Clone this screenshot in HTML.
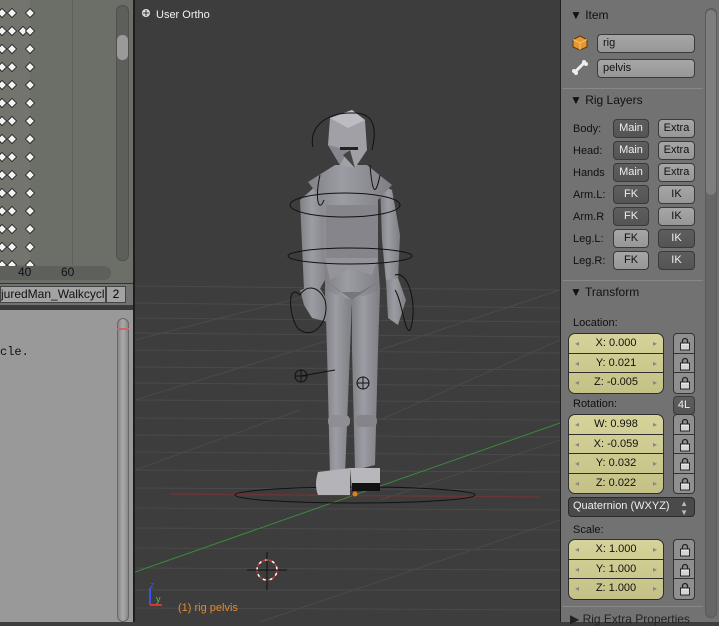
<!DOCTYPE html>
<html><head><meta charset="utf-8"><style>
*{margin:0;padding:0;box-sizing:border-box}
body{width:719px;height:622px;overflow:hidden;background:#3d3d3d;font-family:"Liberation Sans","DejaVu Sans",sans-serif;position:relative}
.a{position:absolute}
.lbl{position:absolute;font-size:11px;color:#101010}
.btn{position:absolute;height:19px;border:1px solid #3a3a3a;border-radius:4px;font-size:11px;text-align:center;line-height:17px}
.lt{background:linear-gradient(#a6a6a6,#979797);color:#111}
.dk{background:linear-gradient(#5e5e5e,#545454);color:#eee}
.fld{position:absolute;left:568px;width:96px;background:linear-gradient(#d6d39a,#c4c186);border:1px solid #2e2e2e;border-radius:7px;overflow:hidden}
.fld div{height:19.5px;border-bottom:1px solid #2e2e2e;font-size:11px;color:#111;text-align:center;line-height:19px;position:relative}
.fld div:last-child{border-bottom:none}
.fld div:before{content:"◂";position:absolute;left:6px;color:#888;font-size:8px}
.fld div:after{content:"▸";position:absolute;right:6px;color:#888;font-size:8px}
.lk{position:absolute;left:673px;width:22px;background:#8f8f8f;border:1px solid #333;border-radius:4px;overflow:hidden}
.lk div{height:19.5px;border-bottom:1px solid #333;position:relative}
.lk div:last-child{border-bottom:none}
.lk svg{position:absolute;left:5px;top:3px}
.hd{position:absolute;left:570px;font-size:12px;color:#111}
.sep{position:absolute;left:563px;width:140px;height:1px;background:#555;border-bottom:1px solid #888}
</style></head><body>
<svg width="0" height="0" style="position:absolute"><defs><g id="lock"><path d="M3.5 6V4a2.5 2.5 0 0 1 5 0v2" fill="none" stroke="#222" stroke-width="1.3"/><rect x="1.5" y="6" width="9" height="7" fill="#e8e8e8" stroke="#222"/><path d="M1.5 9h9M1.5 11h9" stroke="#999" stroke-width="0.6"/></g></defs></svg>
<div class="a" style="left:0;top:0;width:133px;height:283px;background:#6c6e68"></div>
<div class="a" style="left:0;top:0;width:30px;height:265px;background:#72746d"></div>
<div class="a" style="left:72px;top:0;width:1px;height:265px;background:#5e605b"></div>
<svg class="a" style="left:0;top:0" width="133" height="283">
<defs><path id="dm" d="M0 -4.5L4.5 0L0 4.5L-4.5 0Z" fill="#f2f2f2" stroke="#1a1a1a" stroke-width="0.8"/></defs>
<use href="#dm" x="2" y="13"/><use href="#dm" x="12" y="13"/><use href="#dm" x="30" y="13"/>
<use href="#dm" x="2" y="31"/><use href="#dm" x="12" y="31"/><use href="#dm" x="23" y="31"/><use href="#dm" x="30" y="31"/>
<use href="#dm" x="2" y="49"/><use href="#dm" x="12" y="49"/><use href="#dm" x="30" y="49"/>
<use href="#dm" x="2" y="67"/><use href="#dm" x="12" y="67"/><use href="#dm" x="30" y="67"/>
<use href="#dm" x="2" y="85"/><use href="#dm" x="12" y="85"/><use href="#dm" x="30" y="85"/>
<use href="#dm" x="2" y="103"/><use href="#dm" x="12" y="103"/><use href="#dm" x="30" y="103"/>
<use href="#dm" x="2" y="121"/><use href="#dm" x="12" y="121"/><use href="#dm" x="30" y="121"/>
<use href="#dm" x="2" y="139"/><use href="#dm" x="12" y="139"/><use href="#dm" x="30" y="139"/>
<use href="#dm" x="2" y="157"/><use href="#dm" x="12" y="157"/><use href="#dm" x="30" y="157"/>
<use href="#dm" x="2" y="175"/><use href="#dm" x="12" y="175"/><use href="#dm" x="30" y="175"/>
<use href="#dm" x="2" y="193"/><use href="#dm" x="12" y="193"/><use href="#dm" x="30" y="193"/>
<use href="#dm" x="2" y="211"/><use href="#dm" x="12" y="211"/><use href="#dm" x="30" y="211"/>
<use href="#dm" x="2" y="229"/><use href="#dm" x="12" y="229"/><use href="#dm" x="30" y="229"/>
<use href="#dm" x="2" y="247"/><use href="#dm" x="12" y="247"/><use href="#dm" x="30" y="247"/>
<use href="#dm" x="2" y="265"/><use href="#dm" x="12" y="265"/><use href="#dm" x="30" y="265"/>
</svg>
<div class="a" style="left:116px;top:5px;width:13px;height:256px;background:#5d5f5a;border:1px solid #4e504b;border-radius:6px"></div>
<div class="a" style="left:117px;top:35px;width:11px;height:25px;background:#9a9a9a;border-radius:5px"></div>
<div class="a" style="left:0;top:266px;width:111px;height:14px;background:#5e605b;border-radius:0 7px 7px 0"></div>
<div class="a" style="left:18px;top:265px;font-size:12px;color:#111">40</div>
<div class="a" style="left:61px;top:265px;font-size:12px;color:#111">60</div>
<div class="a" style="left:0;top:283px;width:133px;height:22px;background:#727272;border-top:1px solid #333"></div>
<div class="a" style="left:0;top:286px;width:106px;height:17px;background:#a3a3a3;border:1px solid #444;font-size:12px;line-height:15px;color:#111;overflow:hidden;white-space:nowrap">juredMan_Walkcycle</div>
<div class="a" style="left:106px;top:286px;width:20px;height:17px;background:#a3a3a3;border:1px solid #444;font-size:12px;text-align:center;line-height:15px">2</div>
<div class="a" style="left:0;top:306px;width:133px;height:4px;background:#3a3a3a"></div>
<div class="a" style="left:0;top:310px;width:133px;height:312px;background:#999"></div>
<div class="a" style="left:0;top:345px;font-family:'Liberation Mono',monospace;font-size:12px;color:#111">cle.</div>
<div class="a" style="left:117px;top:318px;width:12px;height:304px;background:linear-gradient(90deg,#888,#aaa,#888);border-radius:6px;border:1px solid #666"></div>
<div class="a" style="left:117px;top:328px;width:12px;height:2px;background:#c66"></div>
<div class="a" style="left:133px;top:0;width:2px;height:622px;background:#1e1e1e"></div>
<svg class="a" style="left:135px;top:0" width="425" height="622" viewBox="135 0 425 622">
<rect x="135" y="0" width="425" height="622" fill="#3d3d3d"/>
<g stroke="#4a4a4a" stroke-width="1">
<path d="M135 286L560 290M135 303L560 308M135 318L560 322M135 333L560 337M135 350L560 353M135 367L560 370M135 383L560 386M135 400L560 402M135 418L560 420M135 435L560 437M135 452L560 455M135 470L560 472M135 488L560 490M135 508L560 510M135 528L560 530M135 548L560 550M135 568L560 570M135 590L560 590M135 608L560 610"/>
<path d="M135 340L330 290M135 400L330 340M135 470L300 410M380 350L560 290M380 420L560 340M380 500L560 440M260 622L560 520"/>
</g>
<line x1="135" y1="572" x2="560" y2="423" stroke="#3d8a3d" stroke-width="1"/>
<line x1="170" y1="494" x2="540" y2="497" stroke="#6a3535" stroke-width="1.5"/>
<ellipse cx="355" cy="495" rx="120" ry="8" fill="none" stroke="#111"/>
<defs>
<linearGradient id="bg" x1="0" x2="1"><stop offset="0" stop-color="#808086"/><stop offset="0.4" stop-color="#9c9ca4"/><stop offset="1" stop-color="#7e7e84"/></linearGradient>
</defs>
<g fill="url(#bg)">
<path d="M300 200L318 184L330 190L325 280L318 292L304 290Z"/>
<path d="M380 185L392 190L400 235L398 280L386 282L382 240Z"/>
<path d="M300 290L318 285L330 305L328 322L312 318L304 305Z"/>
<path d="M386 280L398 278L406 300L398 325L388 318Z"/>
<path d="M308 182L335 165L367 165L392 185L378 200L378 260L325 260L322 200Z"/>
<path d="M325 258L378 258L380 290L352 305L325 295Z"/>
<path d="M325 290L352 300L350 350L345 475L330 475L327 350Z"/>
<path d="M352 300L380 290L378 350L375 465L355 470L352 350Z"/>
</g>
<rect x="326" y="205" width="52" height="55" fill="#85858b"/>
<path d="M325 258L378 258L372 275L350 268L330 280Z" fill="#94949a"/>
<path d="M325 280L352 300L378 282L360 292L340 292Z" fill="#76767c"/>
<rect x="328" y="415" width="22" height="12" rx="5" fill="#8e8e94"/>
<rect x="355" y="415" width="22" height="12" rx="5" fill="#84848a"/>
<path d="M318 472L350 468L350 495L318 495Q314 485 318 472Z" fill="#b4b4b8"/>
<path d="M350 468L380 468L380 490L352 490Z" fill="#b8b8bc"/>
<rect x="352" y="483" width="28" height="8" fill="#111"/>
<path d="M330 118L352 110L365 120L367 150L355 168L340 165L328 145Z" fill="#a0a0a6"/>
<path d="M330 118L352 110L365 120L348 128Z" fill="#bcbcc2"/>
<path d="M328 145L340 165L348 150Z" fill="#86868c"/>
<path d="M343 155L355 168L350 150Z" fill="#444"/>
<rect x="340" y="147" width="18" height="3" fill="#222"/>
<g fill="none" stroke="#111" stroke-width="1">
<path d="M313 147C308 125 330 112 352 113C372 112 378 125 372 150"/>
<path d="M320 175C315 195 318 215 324 200M370 165C372 190 375 200 380 175"/>
<ellipse cx="345" cy="205" rx="55" ry="12"/>
<ellipse cx="350" cy="256" rx="62" ry="8"/>
<path d="M300 295C285 280 290 325 300 330C315 340 330 320 325 300C318 285 306 285 300 295Z"/>
<path d="M395 275C410 270 418 310 410 330C405 335 402 300 395 290"/>
<path d="M301 376L335 370"/><circle cx="301" cy="376" r="6"/><circle cx="363" cy="383" r="6"/>
<path d="M295 376h12M301 370v12M357 383h12M363 377v12"/>
</g>
<circle cx="355" cy="494" r="2.5" fill="#e08020"/>
<circle cx="267" cy="570" r="10" fill="none" stroke="#c33" stroke-dasharray="4 3" stroke-width="1.5"/>
<circle cx="267" cy="570" r="10" fill="none" stroke="#fff" stroke-dasharray="3 4" stroke-dashoffset="4" stroke-width="1.5"/>
<path d="M247 570h40M267 552v38" stroke="#111"/>
<path d="M150 605V588" stroke="#3355ee" stroke-width="2"/><path d="M150 605h12" stroke="#d33" stroke-width="2"/>
<text x="150" y="588" font-size="9" fill="#3355ee" font-family="Liberation Sans">z</text>
<text x="156" y="602" font-size="9" fill="#4c4" font-family="Liberation Sans">y</text>
<text x="178" y="611" font-size="11" fill="#e08a30" font-family="Liberation Sans">(1) rig pelvis</text>
<circle cx="146" cy="13" r="4" fill="#ddd"/><path d="M143 13h6M146 10v6" stroke="#333"/>
<text x="156" y="18" font-size="11" fill="#f0f0f0" font-family="Liberation Sans">User Ortho</text>
</svg>
<div class="a" style="left:560px;top:0;width:159px;height:622px;background:#727272;border-left:1px solid #222"></div>
<div class="a" style="left:705px;top:8px;width:12px;height:610px;background:#666;border:1px solid #5a5a5a;border-radius:6px"></div>
<div class="a" style="left:706px;top:10px;width:10px;height:185px;background:#7e7e7e;border-radius:5px"></div>
<div class="hd" style="top:8px">▼ Item</div>
<svg class="a" style="left:572px;top:35px" width="16" height="16"><path d="M8 1L15 4.5V12L8 15L1 12V4.5Z" fill="#e8962e" stroke="#5a3a10"/><path d="M1 4.5L8 8L15 4.5M8 8V15" stroke="#f6c070" fill="none"/></svg>
<svg class="a" style="left:572px;top:59px" width="16" height="16"><path d="M3 13L12 4" stroke="#eee" stroke-width="3" stroke-linecap="round"/><circle cx="12" cy="3" r="2" fill="#eee"/><circle cx="14" cy="5" r="2" fill="#eee"/><circle cx="2" cy="12" r="2" fill="#eee"/><circle cx="4" cy="14" r="2" fill="#eee"/></svg>
<div class="btn lt" style="left:597px;top:34px;width:98px;text-align:left;padding-left:5px">rig</div>
<div class="btn lt" style="left:597px;top:59px;width:98px;text-align:left;padding-left:5px">pelvis</div>
<div class="sep" style="top:88px"></div>
<div class="hd" style="top:93px">▼ Rig Layers</div>
<div class="lbl" style="left:573px;top:123px">Body:</div>
<div class="lbl" style="left:573px;top:145px">Head:</div>
<div class="lbl" style="left:573px;top:167px">Hands</div>
<div class="lbl" style="left:573px;top:189px">Arm.L:</div>
<div class="lbl" style="left:573px;top:211px">Arm.R</div>
<div class="lbl" style="left:573px;top:233px">Leg.L:</div>
<div class="lbl" style="left:573px;top:255px">Leg.R:</div>
<div class="btn dk" style="left:613px;top:119px;width:36px">Main</div>
<div class="btn lt" style="left:658px;top:119px;width:37px">Extra</div>
<div class="btn dk" style="left:613px;top:141px;width:36px">Main</div>
<div class="btn lt" style="left:658px;top:141px;width:37px">Extra</div>
<div class="btn dk" style="left:613px;top:163px;width:36px">Main</div>
<div class="btn lt" style="left:658px;top:163px;width:37px">Extra</div>
<div class="btn dk" style="left:613px;top:185px;width:36px">FK</div>
<div class="btn lt" style="left:658px;top:185px;width:37px">IK</div>
<div class="btn dk" style="left:613px;top:207px;width:36px">FK</div>
<div class="btn lt" style="left:658px;top:207px;width:37px">IK</div>
<div class="btn lt" style="left:613px;top:229px;width:36px">FK</div>
<div class="btn dk" style="left:658px;top:229px;width:37px">IK</div>
<div class="btn lt" style="left:613px;top:251px;width:36px">FK</div>
<div class="btn dk" style="left:658px;top:251px;width:37px">IK</div>
<div class="sep" style="top:280px"></div>
<div class="hd" style="top:285px">▼ Transform</div>
<div class="lbl" style="left:573px;top:317px">Location:</div>
<div class="fld" style="top:333px"><div>X: 0.000</div><div>Y: 0.021</div><div>Z: -0.005</div></div>
<div class="lk" style="top:333px"><div><svg width="12" height="14"><use href="#lock"/></svg></div><div><svg width="12" height="14"><use href="#lock"/></svg></div><div><svg width="12" height="14"><use href="#lock"/></svg></div></div>
<div class="lbl" style="left:573px;top:398px">Rotation:</div>
<div class="btn dk" style="left:673px;top:396px;width:22px;font-size:11px">4L</div>
<div class="fld" style="top:414px"><div>W: 0.998</div><div>X: -0.059</div><div>Y: 0.032</div><div>Z: 0.022</div></div>
<div class="lk" style="top:414px"><div><svg width="12" height="14"><use href="#lock"/></svg></div><div><svg width="12" height="14"><use href="#lock"/></svg></div><div><svg width="12" height="14"><use href="#lock"/></svg></div><div><svg width="12" height="14"><use href="#lock"/></svg></div></div>
<div class="btn" style="left:568px;top:497px;width:127px;height:20px;background:#4a4a4a;color:#eee;text-align:left;padding-left:4px;border-color:#2a2a2a">Quaternion (WXYZ)<span style="position:absolute;right:6px;font-size:8px;color:#bbb;line-height:9px;top:1px">▲<br>▼</span></div>
<div class="lbl" style="left:573px;top:524px">Scale:</div>
<div class="fld" style="top:539px"><div>X: 1.000</div><div>Y: 1.000</div><div>Z: 1.000</div></div>
<div class="lk" style="top:539px"><div><svg width="12" height="14"><use href="#lock"/></svg></div><div><svg width="12" height="14"><use href="#lock"/></svg></div><div><svg width="12" height="14"><use href="#lock"/></svg></div></div>
<div class="sep" style="top:606px"></div>
<div class="hd" style="top:612px;color:#222">▶ Rig Extra Properties</div>
</body></html>
